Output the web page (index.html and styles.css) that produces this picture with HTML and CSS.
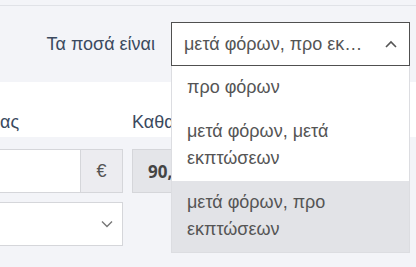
FILE: index.html
```html
<!DOCTYPE html>
<html lang="el">
<head>
<meta charset="utf-8">
<link rel="stylesheet" href="styles.css">
</head>
<body>
<div class="page">
  <div class="topline"></div>
  <div class="toolbar">
    <span class="tb-label">Τα ποσά είναι</span>
    <div class="picker">
      <div class="picker-box">
        <span class="picker-value">μετά φόρων, προ εκπτώσεων</span>
        <svg class="chev-up" width="12" height="8" viewBox="0 0 12 8"><path d="M1 7 L6 2 L11 7" fill="none" stroke="#555" stroke-width="1.6"/></svg>
      </div>
      <ul class="picker-list">
        <li class="opt">προ φόρων</li>
        <li class="opt">μετά φόρων, μετά εκπτώσεων</li>
        <li class="opt active">μετά φόρων, προ εκπτώσεων</li>
      </ul>
    </div>
  </div>
  <div class="labels">
    <span class="lbl">ας</span>
    <span class="lbl">Καθα</span>
  </div>
  <div class="fields">
    <div class="col">
      <div class="group">
        <div class="inp"></div>
        <div class="addon">€</div>
      </div>
      <div class="sel">
        <svg width="12" height="8" viewBox="0 0 12 8"><path d="M1 1.5 L6 6.5 L11 1.5" fill="none" stroke="#777" stroke-width="1.4"/></svg>
      </div>
    </div>
    <div class="col">
      <div class="ro">90,00</div>
    </div>
  </div>
</div>
</body>
</html>
```
FILE: styles.css
```css
html, body {
  margin: 0;
  padding: 0;
  background: #f3f4f8;
  overflow: hidden;
}
.page {
  width: 416px;
  height: 267px;
  font-family: "Liberation Sans", Arial, sans-serif;
  overflow: hidden;
}
.topline {
  height: 5px;
  border-bottom: 1px solid #e0e2e7;
}
.toolbar {
  height: 76px;
  display: flex;
  justify-content: flex-end;
  align-items: center;
  gap: 16px;
  padding-right: 6px;
  position: relative;
  z-index: 5;
}
.tb-label {
  font-size: 18px;
  color: #3b4a5f;
}
.picker {
  position: relative;
  width: 239px;
}
.picker-box {
  height: 44px;
  box-sizing: border-box;
  border: 1px solid #505050;
  background: #fff;
  display: flex;
  align-items: center;
  padding: 0 12px 0 12px;
  gap: 18px;
}
.picker-value {
  flex: 1;
  white-space: nowrap;
  overflow: hidden;
  text-overflow: ellipsis;
  font-size: 18px;
  color: #555;
}
.chev-up {
  flex: none;
}
.picker-list {
  position: absolute;
  top: 100%;
  left: 0;
  right: 0;
  margin: 0;
  padding: 0;
  list-style: none;
  background: #fff;
  border: 1px solid #dcdde1;
  border-top: none;
}
.opt {
  padding: 8px 15px;
  font-size: 18px;
  line-height: 27.5px;
  color: #555;
}
.opt.active {
  background: #e2e3e7;
}
.labels {
  background: #fff;
  height: 55px;
  display: grid;
  grid-template-columns: 123px 123px;
  column-gap: 9px;
  align-items: end;
  box-sizing: border-box;
}
.lbl {
  font-size: 18px;
  color: #3b4a5f;
  padding-bottom: 4px;
  white-space: nowrap;
}
.fields {
  display: grid;
  grid-template-columns: 123px 140px;
  column-gap: 9px;
  padding-top: 12px;
}
.col {
  display: flex;
  flex-direction: column;
  gap: 9px;
}
.group {
  display: flex;
  height: 44px;
}
.inp {
  flex: 1;
  background: #fff;
  border: 1px solid #d5d6da;
  border-left: none;
}
.addon {
  width: 41px;
  background: #ececf0;
  border: 1px solid #d5d6da;
  border-left: none;
  display: flex;
  align-items: center;
  justify-content: center;
  color: #555;
  font-size: 18px;
}
.sel {
  height: 44px;
  box-sizing: border-box;
  background: #fff;
  border: 1px solid #d5d6da;
  border-left: none;
  display: flex;
  align-items: center;
  justify-content: flex-end;
  padding-right: 9px;
}
.ro {
  height: 44px;
  box-sizing: border-box;
  background: #e4e5e9;
  border: 1px solid #d5d6da;
  display: flex;
  align-items: center;
  padding-left: 15px;
  font-weight: bold;
  font-family: "Open Sans", sans-serif;
  font-size: 17px;
  color: #444;
}
```
